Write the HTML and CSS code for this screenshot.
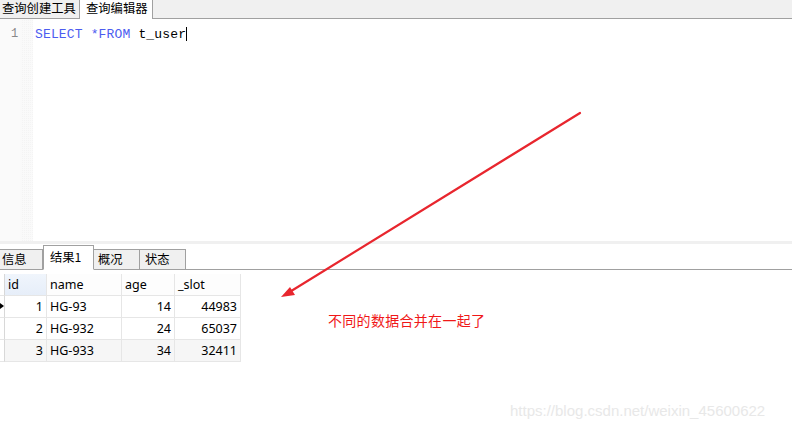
FILE: index.html
```html
<!DOCTYPE html>
<html>
<head>
<meta charset="utf-8">
<link rel="stylesheet" href="styles.css">
</head>
<body>
<div class="page">
  <div class="topbar">
    <div class="ttab">查询创建工具</div>
    <div class="ttab active">查询编辑器</div>
    <div class="tfill"></div>
  </div>
  <div class="editor">
    <div class="gutter"><span class="ln">1</span></div>
    <div class="fold"></div>
    <div class="code"><span class="kw">SELECT</span> <span class="kw">*FROM</span> t_user<span class="caret"></span></div>
  </div>
  <div class="splitter"></div>
  <div class="rtabs">
    <div class="rtab">信息</div>
    <div class="rtab active">结果1</div>
    <div class="rtab">概况</div>
    <div class="rtab">状态</div>
  </div>
  <div class="grid">
    <div class="row head">
      <div class="c ind"></div>
      <div class="c cid first">id</div>
      <div class="c cname">name</div>
      <div class="c cage">age</div>
      <div class="c cslot">_slot</div>
    </div>
    <div class="row">
      <div class="c ind"><span class="tri"></span></div>
      <div class="c cid num">1</div>
      <div class="c cname">HG-93</div>
      <div class="c cage num">14</div>
      <div class="c cslot num">44983</div>
    </div>
    <div class="row">
      <div class="c ind"></div>
      <div class="c cid num">2</div>
      <div class="c cname">HG-932</div>
      <div class="c cage num">24</div>
      <div class="c cslot num">65037</div>
    </div>
    <div class="row alt">
      <div class="c ind"></div>
      <div class="c cid num">3</div>
      <div class="c cname">HG-933</div>
      <div class="c cage num">34</div>
      <div class="c cslot num">32411</div>
    </div>
  </div>

  <svg class="arrow" width="792" height="430" viewBox="0 0 792 430">
    <line x1="580" y1="113" x2="288" y2="293" stroke="#e8262e" stroke-width="2.2" stroke-linecap="round"/>
    <polygon points="281,297 290,287 295,295" fill="#e8262e"/>
  </svg>
  <div class="note">不同的数据合并在一起了</div>
  <div class="wm">https://blog.csdn.net/weixin_45600622</div>
</div>
</body>
</html>
```

FILE: styles.css
```css
* { box-sizing: border-box; }
html, body { margin: 0; padding: 0; background: #fff; }
body {
  font-family: "Noto Sans", "Noto Sans CJK SC", sans-serif;
  font-size: 12px;
  color: #000;
}
.page {
  position: relative;
  width: 792px;
  height: 430px;
  overflow: hidden;
}
.topbar {
  display: flex;
  height: 19px;
  background: #f0f0f0;
}
.ttab {
  width: 80px;
  height: 19px;
  padding: 0 0 0 2px;
  line-height: 17px;
  border-right: 1px solid #a0a0a0;
  border-bottom: 1px solid #a0a0a0;
  font-family: "Noto Sans CJK SC", sans-serif;
  font-size: 12.3px;
}
.ttab.active {
  background: #fff;
  border-bottom: none;
  padding: 0 0 0 6px;
  width: 73px;
}
.tfill {
  flex: 1;
  border-bottom: 1px solid #a0a0a0;
}
.editor {
  display: flex;
  height: 222px;
}
.gutter {
  width: 22px;
  background: #fafafa;
  position: relative;
}
.ln {
  display: block;
  padding-top: 8px;
  padding-left: 11px;
  font-family: "Liberation Mono", monospace;
  font-size: 12px;
  color: #888;
}
.fold {
  width: 11px;
  background-color: #fafafa;
  background-image: linear-gradient(45deg, #f4f4f4 25%, transparent 25%, transparent 75%, #f4f4f4 75%);
  background-size: 2px 2px;
}
.code {
  flex: 1;
  padding-top: 8px;
  padding-left: 2px;
  font-family: "Liberation Mono", monospace;
  font-size: 13px;
  letter-spacing: 0.15px;
  color: #000;
  line-height: 15px;
}
.kw { color: #4c5cf0; }
.caret {
  display: inline-block;
  width: 1px;
  height: 14px;
  background: #000;
  vertical-align: -3px;
}
.splitter {
  height: 3px;
  background: #f0f0f0;
}
.rtabs {
  display: flex;
  align-items: flex-end;
  height: 26px;
  border-bottom: 1px solid #a0a0a0;
}
.rtab {
  height: 21px;
  margin-bottom: -1px;
  padding-left: 2px;
  line-height: 19px;
  background: #f0f0f0;
  border: 1px solid #a0a0a0;
  border-left: none;
  font-family: "Noto Sans CJK SC", sans-serif;
  font-size: 12.3px;
  width: 43px;
}
.rtab.active {
  height: 25px;
  background: #fff;
  border-left: 1px solid #a0a0a0;
  border-bottom: 1px solid #fff;
  width: 51px;
  padding-left: 6px;
  line-height: 22px;
}
.rtab:nth-child(3) { width: 46px; padding-left: 4px; }
.rtab:nth-child(4) { width: 46px; padding-left: 5px; }
.grid {
  display: flex;
  flex-direction: column;
  padding-top: 4px;
}
.row {
  display: flex;
  height: 22px;
}
.c {
  height: 22px;
  line-height: 21px;
  border-right: 1px solid #e6e6e6;
  border-bottom: 1px solid #e6e6e6;
  padding: 0 3px;
  font-family: "Noto Sans", sans-serif;
  font-size: 12.5px;
  white-space: nowrap;
}
.ind { width: 5px; padding: 0; position: relative; border-right: 1px solid #d8d8d8; }
.cid { width: 42px; }
.cname { width: 75px; }
.cage { width: 53px; }
.cslot { width: 66px; }
.num { text-align: right; }
.head .c { background: #fdfdfd; }
.head .first { background: linear-gradient(#f0f5fc, #e6eef9); }
.head .ind { background: #fff; }
.alt .c { background: #f6f6f6; }
.alt .ind { background: #fff; }
.tri {
  position: absolute;
  left: 0;
  top: 7px;
  width: 0;
  height: 0;
  border-top: 3.5px solid transparent;
  border-bottom: 3.5px solid transparent;
  border-left: 4px solid #000;
}
.arrow {
  position: absolute;
  left: 0;
  top: 0;
  pointer-events: none;
}
.note {
  position: absolute;
  left: 328px;
  top: 310px;
  color: #f01818;
  font-family: "Noto Sans CJK SC", sans-serif;
  font-size: 14px;
  letter-spacing: 0.3px;
}
.wm {
  position: absolute;
  left: 510px;
  top: 402px;
  color: #e8e8e8;
  font-family: "Liberation Sans", Arial, sans-serif;
  font-size: 15px;
}
```
